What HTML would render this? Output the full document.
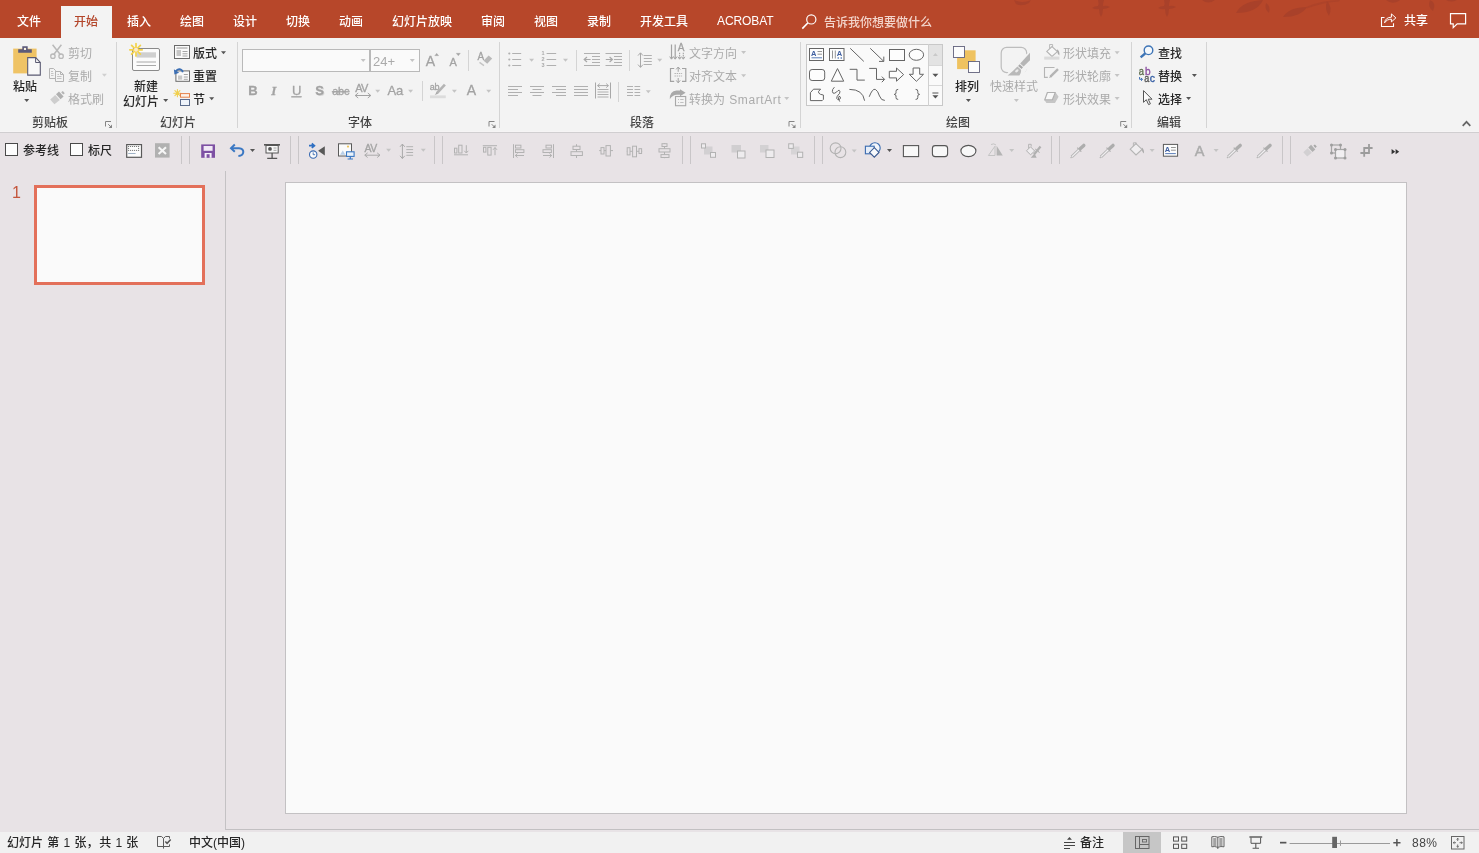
<!DOCTYPE html>
<html lang="zh-CN">
<head>
<meta charset="utf-8">
<title>PowerPoint</title>
<style>
*{box-sizing:border-box;margin:0;padding:0}
html,body{width:1479px;height:853px;overflow:hidden;background:#e8e3e6}
body{font-family:"Liberation Sans","Noto Sans CJK SC",sans-serif;font-size:12px;font-weight:500;color:#262626;position:relative}
#app{position:absolute;left:0;top:0;width:1479px;height:853px;overflow:hidden;background:#e8e3e6;will-change:transform}
.abs{position:absolute}
/* title / tab bar */
#tabbar{position:absolute;left:0;top:0;width:1479px;height:38px;background:#b7472a;overflow:hidden}
#tabbar .tab{position:absolute;top:14px;height:17px;line-height:17px;font-size:12px;color:#fff;white-space:nowrap}
#tabactive{position:absolute;left:61px;top:6px;width:51px;height:33px;background:#f3f3f3}
/* ribbon */
#ribbon{position:absolute;left:0;top:38px;width:1479px;height:95px;background:#f3f3f3;border-bottom:1px solid #d0ced0;box-shadow:inset 0 -1px 0 #f6f4f5}
.t{position:absolute;height:16px;line-height:16px;font-size:12px;white-space:nowrap;color:#262626}
.g{color:#ababab;font-weight:400}
.lbl{color:#444}
.vsep{position:absolute;width:1px;background:#d4d4d4}
/* toolbar */
#toolbar{position:absolute;left:0;top:133px;width:1479px;height:37px;background:#e8e3e6}
.tsep{position:absolute;top:136px;width:1px;height:28px;background:#c9c6c8}
/* body */
#thumb{position:absolute;left:34px;top:185px;width:171px;height:100px;border:3px solid #e3705a;background:#fafafa}
#slide{position:absolute;left:285px;top:182px;width:1122px;height:632px;border:1px solid #c3c1c3;background:#fafafa}
#status{position:absolute;left:0;top:832px;width:1479px;height:21px;background:#f1f1f1}
svg{position:absolute;left:0;top:0;overflow:visible}
</style>
</head>
<body>
<div id="app">

<!-- ===== TAB BAR ===== -->
<div id="tabbar">
  <div id="tabactive"></div>
  <div class="tab" style="left:17px">文件</div>
  <div class="tab" style="left:74px;color:#b3452a">开始</div>
  <div class="tab" style="left:127px">插入</div>
  <div class="tab" style="left:180px">绘图</div>
  <div class="tab" style="left:233px">设计</div>
  <div class="tab" style="left:286px">切换</div>
  <div class="tab" style="left:339px">动画</div>
  <div class="tab" style="left:392px">幻灯片放映</div>
  <div class="tab" style="left:481px">审阅</div>
  <div class="tab" style="left:534px">视图</div>
  <div class="tab" style="left:587px">录制</div>
  <div class="tab" style="left:640px">开发工具</div>
  <div class="tab" style="left:717px;top:13px;letter-spacing:-0.1px">ACROBAT</div>
  <div class="tab" style="left:824px;top:15px;color:#f3d5cc">告诉我你想要做什么</div>
  <div class="tab" style="left:1404px;top:13px">共享</div>
</div>

<!-- ===== RIBBON ===== -->
<div id="ribbon"></div>
<!-- group separators -->
<div class="vsep" style="left:116px;top:42px;height:86px"></div>
<div class="vsep" style="left:237px;top:42px;height:86px"></div>
<div class="vsep" style="left:499px;top:42px;height:86px"></div>
<div class="vsep" style="left:800px;top:42px;height:86px"></div>
<div class="vsep" style="left:1131px;top:42px;height:86px"></div>
<div class="vsep" style="left:1206px;top:42px;height:86px"></div>
<!-- small in-group separators -->
<div class="vsep" style="left:468px;top:50px;height:21px"></div>
<div class="vsep" style="left:422px;top:81px;height:20px"></div>
<div class="vsep" style="left:576px;top:50px;height:21px"></div>
<div class="vsep" style="left:629px;top:50px;height:21px"></div>
<div class="vsep" style="left:618px;top:82px;height:20px"></div>

<!-- clipboard group -->
<div class="t" style="left:13px;top:79px">粘贴</div>
<div class="t g" style="left:68px;top:46px">剪切</div>
<div class="t g" style="left:68px;top:69px">复制</div>
<div class="t g" style="left:68px;top:92px">格式刷</div>
<div class="t lbl" style="left:32px;top:115px">剪贴板</div>
<!-- slides group -->
<div class="t" style="left:134px;top:79px">新建</div>
<div class="t" style="left:123px;top:94px">幻灯片</div>
<div class="t" style="left:193px;top:46px">版式</div>
<div class="t" style="left:193px;top:69px">重置</div>
<div class="t" style="left:193px;top:92px">节</div>
<div class="t lbl" style="left:160px;top:115px">幻灯片</div>
<!-- font group -->
<div class="abs" style="left:242px;top:49px;width:128px;height:23px;border:1px solid #b9b9b9;background:#fafafa"></div>
<div class="abs" style="left:370px;top:49px;width:50px;height:23px;border:1px solid #b9b9b9;background:#fafafa"></div>
<div class="t g" style="left:373px;top:54px;font-size:13px">24+</div>
<div class="t lbl" style="left:348px;top:115px">字体</div>
<!-- paragraph group -->
<div class="t g" style="left:689px;top:46px">文字方向</div>
<div class="t g" style="left:689px;top:69px">对齐文本</div>
<div class="t g" style="left:689px;top:92px;word-spacing:.9px">转换为 <span style="letter-spacing:.6px">SmartArt</span></div>
<div class="t lbl" style="left:630px;top:115px">段落</div>
<!-- drawing group -->
<div class="abs" style="left:806px;top:44px;width:137px;height:62px;border:1px solid #c8c8c8;background:#fafafa"></div>
<div class="abs" style="left:929px;top:45px;width:13px;height:21px;background:#e3e3e3"></div>
<div class="abs" style="left:928px;top:44px;width:1px;height:62px;background:#d0d0d0"></div>
<div class="abs" style="left:929px;top:65px;width:13px;height:1px;background:#d8d8d8"></div>
<div class="abs" style="left:929px;top:85px;width:13px;height:1px;background:#d8d8d8"></div>
<div class="t" style="left:955px;top:79px">排列</div>
<div class="t g" style="left:990px;top:79px">快速样式</div>
<div class="t g" style="left:1063px;top:46px">形状填充</div>
<div class="t g" style="left:1063px;top:69px">形状轮廓</div>
<div class="t g" style="left:1063px;top:92px">形状效果</div>
<div class="t lbl" style="left:946px;top:115px">绘图</div>
<!-- editing group -->
<div class="t" style="left:1158px;top:46px">查找</div>
<div class="t" style="left:1158px;top:69px">替换</div>
<div class="t" style="left:1158px;top:92px">选择</div>
<div class="t lbl" style="left:1157px;top:115px">编辑</div>

<!-- ===== TOOLBAR ===== -->
<div id="toolbar"></div>
<div class="abs" style="left:5px;top:143px;width:13px;height:13px;border:1px solid #4a4a4a;background:#fdfdfd"></div>
<div class="t" style="left:23px;top:143px">参考线</div>
<div class="abs" style="left:70px;top:143px;width:13px;height:13px;border:1px solid #4a4a4a;background:#fdfdfd"></div>
<div class="t" style="left:88px;top:143px">标尺</div>
<div class="tsep" style="left:181px"></div><div class="tsep" style="left:189px"></div>
<div class="tsep" style="left:290px"></div><div class="tsep" style="left:298px"></div>
<div class="tsep" style="left:434px"></div><div class="tsep" style="left:442px"></div>
<div class="tsep" style="left:682px"></div><div class="tsep" style="left:690px"></div>
<div class="tsep" style="left:814px"></div><div class="tsep" style="left:822px"></div>
<div class="tsep" style="left:1051px"></div><div class="tsep" style="left:1059px"></div>
<div class="tsep" style="left:1282px"></div><div class="tsep" style="left:1290px"></div>

<!-- ===== BODY ===== -->
<div class="abs" style="left:225px;top:171px;width:1px;height:659px;background:#c4c2c4"></div>
<div class="abs" style="left:226px;top:829px;width:1253px;height:1px;background:#c2c0c2"></div>
<div class="t" style="left:12px;top:185px;font-size:16px;font-weight:400;color:#c4553c">1</div>
<div id="thumb"></div>
<div id="slide"></div>

<!-- ===== STATUS BAR ===== -->
<div id="status"></div>
<div class="t" style="left:7px;top:835px;word-spacing:.9px">幻灯片 第 1 张<span style="letter-spacing:.8px">，</span>共 1 张</div>
<div class="t" style="left:189px;top:835px">中文(中国)</div>
<div class="t" style="left:1080px;top:835px">备注</div>
<div class="abs" style="left:1123px;top:832px;width:38px;height:21px;background:#c6c6c6"></div>
<div class="t" style="left:1412px;top:835px;color:#444;letter-spacing:.5px">88%</div>


<!-- ===== ICON OVERLAY ===== -->
<svg width="1479" height="853" viewBox="0 0 1479 853">
<g fill="#a6402a" opacity=".8">
<path d="M1014 0q8 4 17 0l-2 3q-7 4-13 1z"/>
<path d="M1098 0q1 4 0 6q-4 0-6 2q4 2 7 1q0 5 2 8q2-3 2-8q4 0 7-2q-3-2-7-1q0-3 1-6z"/>
<path d="M1164 0q1 4 0 6q-4 0-6 2q4 2 7 1q0 5 2 8q2-3 2-8q4 0 7-2q-3-2-7-1q0-3 1-6z"/>
<path d="M1202 0q6 5 13 0z"/>
<path d="M1236 13q6-12 27-13q-6 13-27 13z"/>
<path d="M1266 3q5 3 3 10q-5-4-3-10z"/>
<path d="M1283 17q6-10 24-10q-6 10-24 10z"/>
<path d="M1306 7q16-7 34-7l-1 1.500q-16 1-32 7z" opacity=".7"/>
<path d="M1327 1q6 6 2 15q-5-7-2-15z"/>
<path d="M1386 0q6 5 13 1l1-1z"/>
<path d="M1430 0q7 3 3 11q-6-4-3-11z"/>
<path d="M1446 0q5 3 11 0z"/>
</g>
<g fill="none" stroke="#fff" stroke-width="1.2">
<circle cx="811.3" cy="19.4" r="4.6"/><path d="M808 22.8L802.3 28.6" stroke-width="1.6"/>
<path d="M1384.5 17.5H1381.5V26.5H1393.5V23.2" stroke-width="1.1"/>
<path d="M1384.6 22.8C1385 19.2 1387.6 17.2 1391.4 17.2V13.9L1395.9 17.9L1391.4 21.9V19.2C1388.6 19.2 1386.2 20.2 1384.6 22.8Z" stroke-width="1" stroke-linejoin="round"/>
<path d="M1450.5 13.6H1465.6V23.8H1457.2L1453.2 27.6V23.8H1450.5Z" stroke-width="1.2" stroke-linejoin="miter"/>
</g>
<g><path d="M24.2 99.0h5l-2.5 3z" fill="#555"/><path d="M101.9 73.8h5l-2.5 3z" fill="#d0d0d0"/><path d="M163.2 99.0h5l-2.5 3z" fill="#555"/><path d="M221.0 51.2h5l-2.5 3z" fill="#555"/><path d="M209.2 97.2h5l-2.5 3z" fill="#555"/><path d="M360.7 59.0h5l-2.5 3z" fill="#c4c4c4"/><path d="M409.8 59.0h5l-2.5 3z" fill="#c4c4c4"/><path d="M375.2 89.8h5l-2.5 3z" fill="#c4c4c4"/><path d="M408.1 89.8h5l-2.5 3z" fill="#c4c4c4"/><path d="M451.9 89.8h5l-2.5 3z" fill="#c4c4c4"/><path d="M486.2 89.8h5l-2.5 3z" fill="#c4c4c4"/><path d="M529.1 58.8h5l-2.5 3z" fill="#c4c4c4"/><path d="M563.0 58.8h5l-2.5 3z" fill="#c4c4c4"/><path d="M657.2 58.8h5l-2.5 3z" fill="#c4c4c4"/><path d="M645.8 90.2h5l-2.5 3z" fill="#c4c4c4"/><path d="M741.1 51.0h5l-2.5 3z" fill="#c4c4c4"/><path d="M741.1 74.3h5l-2.5 3z" fill="#c4c4c4"/><path d="M784.2 96.9h5l-2.5 3z" fill="#c4c4c4"/><path d="M965.9 99.0h5l-2.5 3z" fill="#555"/><path d="M1013.9 99.0h5l-2.5 3z" fill="#c4c4c4"/><path d="M1114.6 51.2h5l-2.5 3z" fill="#c4c4c4"/><path d="M1114.6 74.0h5l-2.5 3z" fill="#c4c4c4"/><path d="M1114.6 97.0h5l-2.5 3z" fill="#c4c4c4"/><path d="M1191.9 74.0h5l-2.5 3z" fill="#555"/><path d="M1186.1 97.0h5l-2.5 3z" fill="#555"/><path d="M250.0 148.9h5l-2.5 3z" fill="#555"/><path d="M386.1 148.7h5l-2.5 3z" fill="#c4c4c4"/><path d="M420.8 148.7h5l-2.5 3z" fill="#c4c4c4"/><path d="M851.7 149.5h5l-2.5 3z" fill="#c4c4c4"/><path d="M887.0 149.1h5l-2.5 3z" fill="#555"/><path d="M1009.2 149.0h5l-2.5 3z" fill="#c4c4c4"/><path d="M1149.6 149.0h5l-2.5 3z" fill="#c4c4c4"/><path d="M1213.6 149.0h5l-2.5 3z" fill="#c4c4c4"/></g>
<path d="M932.9 56.1h5l-2.5-3z" fill="#c9c9c9"/><path d="M932.4 73.7h6l-3 3.2z" fill="#555"/><path d="M932.4 92.5h6v1h-6z M932.4 95.3h6l-3 3.2z" fill="#555"/>
<path d="M105.5 126.5V121.5H111" fill="none" stroke="#848484" stroke-width="1"/><path d="M108.2 124.2L111 127" stroke="#848484" stroke-width="1"/><path d="M112 124.6V128H108.6Z" fill="#848484"/>
<path d="M489.0 126.5V121.5H494.5" fill="none" stroke="#848484" stroke-width="1"/><path d="M491.7 124.2L494.5 127" stroke="#848484" stroke-width="1"/><path d="M495.5 124.6V128H492.1Z" fill="#848484"/>
<path d="M789.0 126.5V121.5H794.5" fill="none" stroke="#848484" stroke-width="1"/><path d="M791.7 124.2L794.5 127" stroke="#848484" stroke-width="1"/><path d="M795.5 124.6V128H792.1Z" fill="#848484"/>
<path d="M1120.7 126.5V121.5H1126.2" fill="none" stroke="#848484" stroke-width="1"/><path d="M1123.4 124.2L1126.2 127" stroke="#848484" stroke-width="1"/><path d="M1127.2 124.6V128H1123.8Z" fill="#848484"/>
<path d="M1462.700 125.800L1466.500 121.800L1470.300 125.800" fill="none" stroke="#666" stroke-width="1.700"/>
<!-- paste icon -->
<g>
<rect x="13.2" y="48.6" width="23.4" height="24.8" fill="#efc365"/>
<path d="M18.2 49.2h13.6v3.6h-13.6z M22.3 46.2h5.4v3.4h-5.4z" fill="#5c5a79"/>
<circle cx="25" cy="48.9" r="1.2" fill="#fdf6e6"/>
<path d="M27.7 57.6h8l4.6 4.8v12.7h-12.6z" fill="#f8f8f8" stroke="#5a5a72" stroke-width="1.1"/>
<path d="M35.6 57.8v4.7h4.6" fill="none" stroke="#5a5a72" stroke-width="1"/>
</g>
<!-- cut (disabled) -->
<g fill="none" stroke="#b9b9b9" stroke-width="1.5">
<path d="M52.6 44.8L60.4 54.8M61.4 44.8L53.6 54.8"/>
<circle cx="52.9" cy="56.2" r="2.2" stroke-width="1.3"/><circle cx="61.1" cy="56.2" r="2.2" stroke-width="1.3"/>
</g>
<!-- copy (disabled) -->
<g fill="#f3f3f3" stroke="#b4b4b4" stroke-width="1">
<path d="M49.5 68.5h4l2 2v8h-6z"/>
<path d="M55.5 71.5h5l3 3v7h-8z"/>
<path d="M60.5 71.7v2.8h2.8" fill="none"/>
<path d="M51 71.5h2M51 73.5h2.5M51 75.5h2.5M57 76.5h4.5M57 78.5h4.5M57.5 74.5h1.5" stroke="#c4c4c4" fill="none"/>
</g>
<!-- format painter (disabled) -->
<g>
<path d="M61.2 92.2l1.6-1.2l2 2.2l-1.6 1.4z" fill="#b5b5b5"/>
<path d="M56 94.2l3-2.8l4.6 5l-3 2.8z" fill="#b0b0b0"/>
<path d="M55.2 95l4.6 5l-5.4 4.2l-4.2-4.6z" fill="#cdcdcd"/>
</g>
<!-- new slide -->
<g>
<rect x="132.5" y="48.5" width="27" height="22" rx="1.5" fill="#fbfbfb" stroke="#8a8a8a"/>
<rect x="136.5" y="52.3" width="19.5" height="5.3" fill="#cfcfcf"/>
<path d="M136.5 62h19.5M136.5 65.5h19.5" stroke="#a8a8a8" stroke-width="1"/>
<g stroke="#f3d24a" stroke-width="1.7" stroke-linecap="round">
<path d="M136 43.6v12.4M129.8 49.8h12.4M131.6 45.4l8.8 8.8M140.4 45.4l-8.8 8.8"/>
</g>
<circle cx="136" cy="49.8" r="2" fill="#fbe9d0"/>
</g>
<!-- layout -->
<g>
<rect x="174.5" y="45.5" width="15" height="13" fill="#fafafa" stroke="#6a6a6a"/>
<path d="M176.5 48h11" stroke="#bdbdbd" stroke-width="1.6"/>
<rect x="176.5" y="50" width="4.5" height="6" fill="#c6c6c6"/>
<path d="M182.5 51.5h5M182.5 53.8h5M182.5 56h5" stroke="#9a9a9a" stroke-width=".9"/>
</g>
<!-- reset -->
<g>
<rect x="175.9" y="70.9" width="13.6" height="10.4" fill="#fafafa" stroke="#6a6a6a"/>
<rect x="178" y="75.5" width="4.2" height="4.2" fill="#c8c8c8"/>
<path d="M183.8 74.5h4M183.8 77h4M183.8 79.3h4" stroke="#9a9a9a" stroke-width=".9"/>
<path d="M182.8 72.2C182 68.6 177.6 68 176 71.2" fill="none" stroke="#3c6fb4" stroke-width="1.7"/>
<path d="M173.9 69.2l.5 5.2l4.8-1.6z" fill="#3c6fb4"/>
</g>
<!-- section -->
<g>
<g stroke="#f0cf4c" stroke-width="1.1" stroke-linecap="round"><path d="M177.4 89.6v7.2M173.8 93.2h7.2M174.9 90.7l5 5M179.9 90.7l-5 5"/></g>
<rect x="180.5" y="93.6" width="9" height="3.6" fill="#fdf3ea" stroke="#e5824a"/>
<rect x="180.5" y="99.5" width="9" height="6" fill="#eef3fa" stroke="#5b6c8c"/>
</g>
<!-- font group glyph buttons (disabled) -->
<g fill="#a3a3a3" stroke="#a3a3a3" stroke-width=".3" font-family="Liberation Sans, sans-serif">
<text x="248.3" y="95.3" font-size="13" font-weight="bold">B</text>
<text x="271.2" y="95.3" font-size="13" font-style="italic" font-family="Liberation Serif, serif" font-weight="bold">I</text>
<text x="292" y="94.8" font-size="13">U</text>
<rect x="291.6" y="96.2" width="10" height="1.1"/>
<text x="316.2" y="96.3" font-size="13" font-weight="bold" fill="#d9d9d9" stroke="none">S</text>
<text x="315.2" y="95.3" font-size="13" font-weight="bold">S</text>
<text x="332.3" y="95" font-size="11" letter-spacing="-.3">abc</text>
<rect x="332" y="91.2" width="17.6" height="1"/>
<text x="355.2" y="91.8" font-size="11" letter-spacing="-.6">AV</text>
<path d="M355.2 95.5h15.6" stroke="#a3a3a3" stroke-width="1" fill="none"/><path d="M358.2 93l-3 2.5l3 2.5M367.8 93l3 2.5l-3 2.5" stroke="#a3a3a3" stroke-width="1" fill="none"/>
<text x="387.6" y="94.8" font-size="13" letter-spacing="-.3">Aa</text>
<text x="425.8" y="65.8" font-size="14">A</text>
<path d="M434.7 55.7h4l-2-2.4z"/>
<text x="449.6" y="65.8" font-size="11">A</text>
<path d="M456.2 53.3h4.2l-2.1 2.5z"/>
<text x="477.6" y="60.4" font-size="10">A</text>
<path d="M483.6 60.8l5-5.2l3.6 3l-5 5.2z" fill="#b9b9b9" stroke="none"/>
<path d="M479.5 62.4l4.5 3.2" stroke="#c4c4c4" stroke-width="1.4" fill="none"/>
<text x="429.8" y="89.6" font-size="9" letter-spacing="-.3">ab</text>
<path d="M444.9 84.6l-8 8.6" stroke="#b4b4b4" stroke-width="2.6" fill="none"/>
<path d="M436.6 92.4l-1.4 2.4l2.6-1.2z"/>
<rect x="430" y="95.4" width="15.8" height="2.8" fill="#dcdcdc" stroke="none"/>
<text x="466.8" y="95.3" font-size="14">A</text>
</g>
<!-- paragraph group (disabled) -->
<g fill="none" stroke="#b0b0b0" stroke-width="1">
<!-- bullets -->
<path d="M512.2 53.5h9M512.2 59.5h9M512.2 65.5h9"/>
<g fill="#b0b0b0" stroke="none"><circle cx="509.3" cy="53.5" r="1.1"/><circle cx="509.3" cy="59.5" r="1.1"/><circle cx="509.3" cy="65.5" r="1.1"/></g>
<!-- numbering -->
<path d="M546.6 53.5h9.6M546.6 59.5h9.6M546.6 65.5h9.6"/>
<g fill="#aaa" stroke="none" font-family="Liberation Sans, sans-serif" font-size="5.5" font-weight="bold"><text x="541.4" y="55.4">1</text><text x="541.4" y="61.4">2</text><text x="541.4" y="67.4">3</text></g>
<!-- decrease indent -->
<path d="M584 53.5h16M592 56.5h8M592 59.5h8M592 62.5h8M584 65.5h16"/>
<path d="M590.6 59.5h-6.2M587 57l-2.8 2.5l2.8 2.5" stroke="#a8a8a8" stroke-width="1.2"/>
<!-- increase indent -->
<path d="M605.5 53.5h16.5M614 56.5h8M614 59.5h8M614 62.5h8M605.5 65.5h16.5"/>
<path d="M605.8 59.5h6.2M609.6 57l2.8 2.5l-2.8 2.5" stroke="#a8a8a8" stroke-width="1.2"/>
<!-- line spacing -->
<path d="M643.8 55.5h8M643.8 58.5h8M643.8 61.5h8M643.8 64.5h8"/>
<path d="M640.5 53v14.2M638 55.6l2.5-2.8l2.5 2.8M638 64.6l2.5 2.8l2.5-2.8" stroke="#a8a8a8"/>
<!-- align left / center / right / justify -->
<path d="M508 86.5h14M508 89.5h10M508 92.5h14M508 95.5h10"/>
<path d="M530 86.5h14M532.5 89.5h9M530 92.5h14M532.5 95.5h9"/>
<path d="M552 86.5h14M556 89.5h10M552 92.5h14M556 95.5h10"/>
<path d="M574 86.5h14M574 89.5h14M574 92.5h14M574 95.5h14"/>
<!-- distribute -->
<path d="M595.5 82.5v16M610.5 82.5v16" stroke="#a8a8a8"/>
<path d="M597.5 89.5h11M597.5 92h11M597.5 94.5h11M597.5 97h11"/>
<path d="M597.6 85.6h10.8M599.8 83.6l-2.2 2l2.2 2M606.2 83.6l2.2 2l-2.2 2" stroke="#a8a8a8"/>
<!-- columns -->
<path d="M627 86.5h6M627 89.5h6M627 92.5h6M627 95.5h6M634.5 86.5h5.7M634.5 89.5h5.7M634.5 92.5h5.7M634.5 95.5h5.7"/>
<!-- text direction -->
<path d="M671.5 44.600v14.200M675.200 44.600v14.200" stroke="#a2a2a2" stroke-width="1.200"/>
<path d="M669.700 56.600l1.800 2.600l1.800-2.600M673.400 56.600l1.800 2.600l1.800-2.600" stroke="#a2a2a2" stroke-width="1"/>
<path d="M679.600 52.800v5.800M683.300 52.800v5.800" stroke="#a2a2a2" stroke-width="1.100" stroke-dasharray="1.400 .8"/>
<path d="M678 56.800l1.600 2.400l1.600-2.400M681.700 56.800l1.600 2.400l1.600-2.400" stroke="#a2a2a2" stroke-width="1"/>
<text x="677.800" y="51.200" font-family="Liberation Sans, sans-serif" font-size="10" fill="#a2a2a2" stroke="#a2a2a2" stroke-width=".3">A</text>
<!-- align text -->
<path d="M674.200 68.500h-3.700v12.800h3.700M682 68.500h3.800v12.800h-3.800" stroke="#a2a2a2" stroke-width="1.200"/>
<path d="M678.200 67.200v4.600M676.200 69.400l2-2.400l2 2.400M678.200 82.600v-4.600M676.200 80.400l2 2.400l2-2.400" stroke="#a2a2a2" stroke-width="1"/>
<path d="M674.500 73.500h7.600M674.500 76h7.600" stroke="#b4b4b4" stroke-dasharray="1.400 .8"/>
<!-- smartart -->
<path d="M669.800 99.200Q669.600 91.200 676.500 90.600H680V89.200L685.600 92.800L680 96.300V94.800H677Q672.500 95 669.800 99.200Z" fill="#a9a9a9" stroke="none"/>
<rect x="675.500" y="96.500" width="10.200" height="9.200" fill="#f3f3f3" stroke="#a8a8a8" stroke-width="1.100"/>
<path d="M678 99.500h1M680.200 99.500h3.400M678 102.500h1M680.200 102.500h3.400" stroke="#c0c0c0"/>
</g>
<!-- shapes gallery -->
<g fill="none" stroke="#656565" stroke-width="1">
<!-- row 1 -->
<rect x="809.5" y="48.5" width="14" height="12" fill="#fdfdfd"/>
<text x="811" y="55.8" font-family="Liberation Sans, sans-serif" font-size="7.5" font-weight="bold" fill="#3f5fa0" stroke="none">A</text>
<path d="M817.500 51.500h4.500M817.500 54.200h4.500" stroke="#8a8a8a" stroke-width=".9"/><path d="M811.500 57.800h10.500" stroke="#4a6fb0" stroke-width=".9"/>
<rect x="829.5" y="48.5" width="14.5" height="12" fill="#fdfdfd"/>
<path d="M832.500 50.500v8M835.300 50.500v8" stroke="#8a8a8a" stroke-width=".9"/>
<text x="836.8" y="56" font-family="Liberation Sans, sans-serif" font-size="7.5" font-weight="bold" fill="#3f5fa0" stroke="none">A</text>
<path d="M838.200 57v2M841.200 57v2" stroke="#4a6fb0" stroke-width=".9"/>
<path d="M850.200 48.300L863.800 61.400"/>
<path d="M870.200 48.300L883.600 61.200M883.800 56.600v4.800h-4.800"/>
<rect x="889.5" y="49.500" width="15" height="11" fill="#fdfdfd"/>
<ellipse cx="916.400" cy="54.800" rx="7.200" ry="5.500" fill="#fdfdfd"/>
<!-- row 2 -->
<rect x="809.500" y="69.500" width="15.200" height="11" rx="2.600" fill="#fdfdfd"/>
<path d="M837.500 68.600L843.700 81.200H831.300Z" fill="#fdfdfd"/>
<path d="M849.700 69.300H857V80.100H864.800"/>
<path d="M869.200 68.400H876.500V79.400H884.400M881.800 76.600l2.800 2.800l-2.800 2.800"/>
<path d="M889.300 71.300H896.500V68L903.600 74.600L896.500 81.200V77.900H889.300Z" fill="#fdfdfd"/>
<path d="M913.100 68H919.700V74.300H923.500L916.400 81.300L909.300 74.300H913.100Z" fill="#fdfdfd"/>
<!-- row 3 -->
<path d="M813.5 89.200H820.600Q817.400 91.600 818.800 93.100Q820 94.700 823.400 95V99.400L822.200 100.600H810.400V92.700Z" fill="#fdfdfd"/>
<path d="M834.400 87.200Q832 89.500 832.400 91.600Q832.700 93.900 834.700 93.200Q837 92 838 90.600Q839.400 89.600 839.900 91.300Q840.200 93.400 838.200 95Q836.400 96.800 836.800 98.600Q837.600 100.400 839.600 99.400Q841.200 98 840 96.600Q838.700 95.900 838.400 97.600Q838.400 99.600 839.800 101.600"/>
<path d="M849.400 89.400Q862.800 89.300 864.600 100.700"/>
<path d="M869.200 96.800Q872.500 88.200 875.300 89.400Q877.800 90.500 879.500 96Q881.300 100.800 884.800 100.400"/>
<path d="M898.200 89.400Q895.800 89.300 896 91.400V92.800Q896 94.300 894.200 94.400Q896 94.500 896 96V97.500Q895.800 99.500 898.200 99.400"/>
<path d="M915.600 89.400Q918 89.300 917.800 91.400V92.800Q917.800 94.300 919.600 94.400Q917.800 94.500 917.800 96V97.500Q918 99.500 915.600 99.400"/>
</g>
<!-- arrange -->
<g>
<rect x="957.100" y="50.300" width="18.500" height="18.800" fill="#efc25f"/>
<rect x="953.500" y="46.500" width="11" height="11" fill="#fcfcfc" stroke="#62627c" stroke-width=".9"/>
<rect x="968.500" y="61.500" width="11" height="11" fill="#fcfcfc" stroke="#62627c" stroke-width=".9"/>
</g>
<!-- quick styles (disabled) -->
<g>
<rect x="1001.200" y="47.400" width="25.500" height="25.200" rx="5.500" fill="none" stroke="#bdbdbd" stroke-width="1.200"/>
<path d="M1015 62L1031 51V63L1022 77H1005Z" fill="#f3f3f3"/>
<path d="M1030 52.800V60.200L1023.600 66.600L1020.200 63.600Z" fill="#b6b6b6"/>
<path d="M1019.600 64.200L1023 67.200L1021.500 68.900L1018.100 65.900Z" fill="#a9a9a9"/>
<path d="M1017.400 66.600L1021 69.700Q1021.500 73 1019.400 75.400H1007.600Q1013 71.500 1017.400 66.600Z" fill="#b9b9b9"/>
<ellipse cx="1016.800" cy="70.800" rx="1.900" ry="1.200" transform="rotate(-40 1016.800 70.800)" fill="#ebebeb"/>
</g>
<!-- shape fill (disabled) -->
<g fill="none" stroke="#b4b4b4">
<path d="M1052 46.600L1057.400 51.600L1052 56.400L1046.800 51.400Z" fill="#f7f7f7" stroke-width="1.100"/>
<path d="M1049.600 48.600V44.500H1052.600V47" stroke-width=".9"/>
<path d="M1057 49.200Q1060 51 1059.300 55.500Q1057.500 54 1057.200 51.500Z" fill="#a9a9a9" stroke="none"/>
<rect x="1044.200" y="56.600" width="15.200" height="3" fill="#dadada" stroke="none"/>
</g>
<!-- shape outline (disabled) -->
<g fill="none" stroke="#b4b4b4">
<path d="M1054.500 67.500H1044.500V77.400H1047.800" stroke-width="1.100"/>
<path d="M1058 69.200L1050.400 76.600" stroke-width="2.400"/>
<path d="M1050.300 75.400l-1.300 2.600l2.800-1z" fill="#b0b0b0" stroke="none"/>
</g>
<!-- shape effects (disabled) -->
<g stroke-linejoin="round">
<path d="M1055.600 92.600L1058.600 96.800L1055 103H1046.400L1044.600 100.200H1052.500Z" fill="#c6c6c6"/>
<path d="M1047.400 92.500H1055.300L1052.300 99.900H1044.700Z" fill="#f8f8f8" stroke="#b0b0b0" stroke-width="1.200"/>
</g>
<!-- find -->
<g fill="none" stroke="#3d74b6">
<circle cx="1148.500" cy="50.300" r="4.300" stroke-width="1.400" fill="#f4f8fc"/>
<path d="M1145.200 53.500L1140.600 57.300" stroke-width="2.300"/>
</g>
<!-- replace -->
<g font-family="Liberation Sans, sans-serif" font-size="11" stroke-width=".35">
<text x="1138.800" y="74.700" fill="#5f6f50" stroke="#5f6f50" textLength="5.200" lengthAdjust="spacingAndGlyphs">a</text><text x="1144.900" y="74.700" fill="#8c50a2" stroke="#8c50a2" textLength="5.600" lengthAdjust="spacingAndGlyphs">b</text>
<text x="1144.200" y="81.800" fill="#555" stroke="#555" textLength="5" lengthAdjust="spacingAndGlyphs">a</text><text x="1149.800" y="81.800" fill="#3a62a6" stroke="#3a62a6" textLength="5.200" lengthAdjust="spacingAndGlyphs">c</text>
<path d="M1139.600 77v2.300h2.600M1141 78l1.500 1.400l-1.500 1.400" fill="none" stroke="#3d6db6" stroke-width="1"/>
</g>
<!-- select -->
<path d="M1143.500 90.600V102.300L1146.300 99.700L1148.600 104.600L1150.400 103.800L1148.200 99.200H1152Z" fill="#fbfbfb" stroke="#555" stroke-width="1" stroke-linejoin="round"/>
<!-- ===== toolbar icons ===== -->
<!-- grid settings -->
<g>
<rect x="126.700" y="144.600" width="14.800" height="12.700" fill="#fcfcfc" stroke="#595959" stroke-width="1.200"/>
<g fill="#6a6a6a"><rect x="128.1" y="146.0" width="1" height="1"/><rect x="130.1" y="146.0" width="1" height="1"/><rect x="132.1" y="146.0" width="1" height="1"/><rect x="134.1" y="146.0" width="1" height="1"/><rect x="136.1" y="146.0" width="1" height="1"/><rect x="138.1" y="146.0" width="1" height="1"/><rect x="128.1" y="149.9" width="1" height="1"/><rect x="130.1" y="149.9" width="1" height="1"/><rect x="132.1" y="149.9" width="1" height="1"/><rect x="134.1" y="149.9" width="1" height="1"/><rect x="136.1" y="149.9" width="1" height="1"/><rect x="138.1" y="149.9" width="1" height="1"/><rect x="128.1" y="147.95" width="1" height="1"/><rect x="138.1" y="147.95" width="1" height="1"/></g>
<path d="M128.200 153.500h7.400" stroke="#9fb2c6" stroke-width="1"/>
</g>
<!-- grey X -->
<g><rect x="155" y="143.200" width="14.600" height="14.400" fill="#b1b1b1"/>
<path d="M158.600 147.200l7.400 6.800M166 147.200l-7.400 6.800" stroke="#f6f6f6" stroke-width="2.100"/></g>
<!-- save -->
<g><path d="M201.200 144.400h13.800v13.400h-13.800z" fill="#7d50a3"/>
<rect x="203.600" y="146" width="9" height="4.800" fill="#f1e9f6"/>
<rect x="204.600" y="153" width="7" height="4.800" fill="#f6f1f9"/><rect x="206.600" y="154.200" width="3" height="3.600" fill="#7d50a3"/></g>
<!-- undo -->
<g fill="none" stroke="#3b78c3" stroke-width="2">
<path d="M232 148.200H239Q243.400 148.600 243.300 152Q243 155.600 238.400 156"/>
<path d="M234.800 144.600L231 148.200L234.800 151.800" stroke-linejoin="miter"/>
</g>
<!-- presentation from start -->
<g fill="none" stroke="#565656">
<path d="M264 144.800h16" stroke-width="1.600"/>
<rect x="266" y="145.500" width="12.200" height="7.500" fill="#f7f7f7"/>
<path d="M272.100 153v5M267.200 158.300h10" stroke-width="1.300"/>
<circle cx="270" cy="148.900" r="1.900" fill="#555" stroke="none"/>
<path d="M273.500 148h3M273.500 150.300h3" stroke="#9a9a9a" stroke-width=".9"/>
</g>
<!-- transition timing -->
<g>
<path d="M309 145.700h4.600M311.800 143.500l2.600 2.200l-2.600 2.200" fill="none" stroke="#2f6fc2" stroke-width="1.700"/>
<circle cx="313.200" cy="154.600" r="3.700" fill="#fbfbfb" stroke="#3b6bb2" stroke-width="1.100"/>
<path d="M313.200 152.400v2.300h1.900" fill="none" stroke="#3b6bb2" stroke-width=".9"/>
<path d="M318.100 150.800L324.800 146.200V155.600Z" fill="#585858"/>
</g>
<!-- picture + monitor -->
<g>
<rect x="338.500" y="143.800" width="13" height="12.200" fill="#fbfbfb" stroke="#5a5a5a"/>
<circle cx="348" cy="146.600" r="1.100" fill="#ecc35c"/>
<path d="M340 154.800l2.800-4.300l2.600 4.300z" fill="#b9cfe8"/>
<rect x="346.500" y="151.800" width="7.600" height="4.600" fill="#eaf2fb" stroke="#3b78c3" stroke-width="1.100"/>
<path d="M350.300 156.600v2M347.600 159h5.400" stroke="#3b78c3" stroke-width="1.200" fill="none"/>
</g>
<!-- AV spacing (disabled) -->
<g fill="#a4a4a4"><text x="364.500" y="151.700" font-family="Liberation Sans, sans-serif" font-size="10.500" letter-spacing="-.5" stroke="#a4a4a4" stroke-width=".3">AV</text>
<path d="M364.800 155.200h15.200M367.600 152.900l-2.800 2.300l2.800 2.300M377.200 152.900l2.800 2.300l-2.800 2.300" fill="none" stroke="#aaa"/></g>
<!-- line spacing (disabled) -->
<g fill="none" stroke="#b2b2b2">
<path d="M406.300 146.700h6.800M406.300 149.600h6.800M406.300 152.500h6.800M406.300 155.300h6.800"/>
<path d="M402.400 144.200v14.200M400 146.800l2.400-2.700l2.400 2.700M400 155.800l2.400 2.700l2.400-2.700" stroke="#a8a8a8"/>
</g>
<!-- align icons (disabled) -->
<g fill="none" stroke="#b2b2b2">
<!-- bottom -->
<path d="M454 154.800h14"/><rect x="454.500" y="148.200" width="2.400" height="4.800"/><rect x="458.700" y="145.200" width="3.300" height="7.800"/><path d="M466.300 145.200v7.600M464.300 150.800l2 2.200l2-2.200"/>
<!-- top -->
<path d="M482.800 145.700h14.200"/><rect x="483.500" y="147.300" width="2.400" height="4.800"/><rect x="487.800" y="147.300" width="3.300" height="7.800"/><path d="M495 147.600v7.600M493 149.800l2-2.200l2 2.200"/>
<!-- left -->
<path d="M513.500 144.200v13.800"/><rect x="515.500" y="145.200" width="5.400" height="2.800"/><rect x="515.500" y="149.700" width="8.400" height="2.800"/><path d="M515.300 155.500h8.700M517.500 153.500l-2.200 2l2.200 2"/>
<!-- right -->
<path d="M553.500 144.200v13.800"/><rect x="546" y="145.200" width="5.400" height="2.800"/><rect x="543" y="149.700" width="8.400" height="2.800"/><path d="M543 155.500h8.700M549.500 153.500l2.200 2l-2.200 2"/>
<!-- center h -->
<path d="M576.500 144.200v13.800"/><rect x="573" y="146.200" width="7" height="3.300" fill="#e8e3e6"/><rect x="571" y="151.700" width="11.400" height="3.800" fill="#e8e3e6"/>
<!-- middle v -->
<path d="M599.200 150.600h13.800"/><rect x="601" y="147.600" width="3" height="6.400" fill="#e8e3e6"/><rect x="606" y="145.600" width="4.400" height="10.400" fill="#e8e3e6"/>
<!-- distribute h -->
<path d="M626.800 151.300h15.400"/><rect x="627.200" y="147.700" width="2.800" height="7.200" fill="#e8e3e6"/><rect x="632.600" y="146.200" width="3.900" height="10.600" fill="#e8e3e6"/><rect x="639" y="148.700" width="2.600" height="4.800" fill="#e8e3e6"/>
<!-- distribute v -->
<path d="M664.500 143.200v15"/><rect x="662" y="143.700" width="5" height="2.800" fill="#e8e3e6"/><rect x="659" y="148.700" width="11" height="3.300" fill="#e8e3e6"/><rect x="661" y="154.600" width="8" height="2.900" fill="#e8e3e6"/>
</g>
<!-- group / order icons (disabled) -->
<g stroke="#b2b2b2" fill="#eeecee">
<rect x="704" y="146.500" width="8.500" height="8" fill="#d2d0d2" stroke="none"/>
<rect x="701.500" y="143.800" width="4" height="4.200"/><rect x="710.500" y="152.500" width="5" height="4.800"/>
<rect x="731.500" y="145" width="9.500" height="7.500" fill="#d0ced0" stroke="none"/><rect x="737.500" y="151" width="7.500" height="7"/>
<rect x="760" y="145" width="8.500" height="7.500" fill="#d3d1d3" stroke="none"/><rect x="766" y="150" width="8" height="7.500"/>
<rect x="791" y="146.500" width="8.500" height="8" fill="#d6d4d6" stroke="none"/>
<rect x="788.700" y="143.800" width="4.600" height="4.600"/><rect x="797.500" y="152.200" width="5.200" height="5.200"/>
</g>
<!-- merge shapes (disabled) -->
<g fill="none" stroke="#b2b2b2" stroke-width="1.100"><circle cx="835.600" cy="148.300" r="5.400"/><circle cx="840.400" cy="152.200" r="5.400"/></g>
<!-- shapes -->
<g stroke="#3b6cb0" stroke-width="1.100">
<circle cx="874.900" cy="148" r="5.300" fill="#f3f6fb"/>
<rect x="865.400" y="146.200" width="8.800" height="7.600" fill="#e6eef9"/>
<path d="M874.300 147.700l4.700 4.700l-4.700 4.700l-4.700-4.700z" fill="#f8fafc" stroke="#3a5990"/>
</g>
<!-- rect / rounded rect / ellipse -->
<g fill="#f8f8f8" stroke="#565656" stroke-width="1.100">
<rect x="903.400" y="145.600" width="15.200" height="11"/>
<rect x="932.400" y="145.600" width="15.200" height="11" rx="2.800"/>
<ellipse cx="968.400" cy="151" rx="7.500" ry="5.600"/>
</g>
<!-- flip (disabled) -->
<g><path d="M995 146.200V155.500H988.400Z" fill="none" stroke="#c4c4c4"/><path d="M996.600 145.800L1002.800 155.500H996.600Z" fill="#b4b4b4"/>
<path d="M991 144.500q3-1.500 5 .5" fill="none" stroke="#c0c0c0" stroke-width=".9"/></g>
<!-- format paint combo (disabled) -->
<g fill="none" stroke="#b0b0b0">
<path d="M1030.500 146.800l4.200 4.200l-4.200 3.800l-4-4z" fill="#efedef"/>
<path d="M1028.600 148.300v-4h2.600v2.200" stroke-width=".9"/>
<path d="M1040.500 146.500l-6.500 8" stroke-width="2.200"/>
<path d="M1034.500 153.500l-3.800 4.200h6z" fill="#b0b0b0" stroke="none"/>
<path d="M1035 149q3.500 1 4.500 4" stroke-width=".9"/>
</g>
<g fill="none"><path d="M1083.8 145.4L1080.4 148.5" stroke="#adadad" stroke-width="3.400" stroke-linecap="round"/><path d="M1081.3 151.6L1077.3 147.6" stroke="#adadad" stroke-width="1.300"/><path d="M1079.3 149.6L1071.7 156.9" stroke="#b6b6b6" stroke-width="3"/><path d="M1078.9 150.0L1072.0 156.6" stroke="#f1eff1" stroke-width="1.300"/><path d="M1071.7 156.9L1070.6 158.0" stroke="#b6b6b6" stroke-width="1.100"/><path d="M1113.0 145.4L1109.6 148.5" stroke="#adadad" stroke-width="3.400" stroke-linecap="round"/><path d="M1110.5 151.6L1106.5 147.6" stroke="#adadad" stroke-width="1.300"/><path d="M1108.5 149.6L1100.9 156.9" stroke="#b6b6b6" stroke-width="3"/><path d="M1108.1 150.0L1101.2 156.6" stroke="#f1eff1" stroke-width="1.300"/><path d="M1100.9 156.9L1099.8 158.0" stroke="#b6b6b6" stroke-width="1.100"/><path d="M1240.2 145.4L1236.8 148.5" stroke="#adadad" stroke-width="3.400" stroke-linecap="round"/><path d="M1237.7 151.6L1233.7 147.6" stroke="#adadad" stroke-width="1.300"/><path d="M1235.7 149.6L1228.1 156.9" stroke="#b6b6b6" stroke-width="3"/><path d="M1235.3 150.0L1228.4 156.6" stroke="#f1eff1" stroke-width="1.300"/><path d="M1228.1 156.9L1227.0 158.0" stroke="#b6b6b6" stroke-width="1.100"/><path d="M1270.0 145.4L1266.6 148.5" stroke="#adadad" stroke-width="3.400" stroke-linecap="round"/><path d="M1267.5 151.6L1263.5 147.6" stroke="#adadad" stroke-width="1.300"/><path d="M1265.5 149.6L1257.9 156.9" stroke="#b6b6b6" stroke-width="3"/><path d="M1265.1 150.0L1258.2 156.6" stroke="#f1eff1" stroke-width="1.300"/><path d="M1257.9 156.9L1256.8 158.0" stroke="#b6b6b6" stroke-width="1.100"/></g>
<!-- bucket (disabled) -->
<g fill="none" stroke="#b4b4b4"><path d="M1136 143.600l6 5.800l-6 5.600l-5.800-5.800z" fill="#f0eef0" stroke-width="1.100"/>
<path d="M1133.400 146.200v-3.400h2.800v2" stroke-width=".9"/><path d="M1141.800 147.600q2.600 1.800 2.200 6q-1.800-1.400-2.200-3.600z" fill="#adadad" stroke="none"/></g>
<!-- text box -->
<g><rect x="1163.400" y="144.400" width="14.200" height="11.800" fill="#fcfcfc" stroke="#5a5a5a"/>
<text x="1164.800" y="151.600" font-family="Liberation Sans, sans-serif" font-size="7.500" font-weight="bold" fill="#3f5fa0">A</text>
<path d="M1171 147.500h4.800M1171 150.200h4.800" stroke="#8a8a8a" stroke-width=".9"/><path d="M1165.200 153.600h10.600" stroke="#4a6fb0" stroke-width=".9"/></g>
<!-- A (disabled) -->
<text x="1194.800" y="155.700" font-family="Liberation Sans, sans-serif" font-size="14.500" fill="#acacac" stroke="#acacac" stroke-width=".45">A</text>
<!-- brush (disabled) -->
<g><path d="M1313.400 145.600l1.500-1l1.900 2l-1.500 1.300z" fill="#a8a8a8"/><path d="M1308.300 147.400l2.800-2.600l4.200 4.600l-2.800 2.600z" fill="#b0b0b0"/><path d="M1307.600 148.200l4.200 4.600l-4.600 3.600l-3.900-4.200z" fill="#d2d0d2"/></g>
<!-- select frames -->
<g fill="none" stroke="#a6a6a6"><rect x="1331.500" y="145" width="9" height="8" stroke-width="1.200"/>
<rect x="1335.500" y="149.500" width="9.500" height="8.500" fill="#f1eff1" stroke-width="1.200"/>
<g fill="#9e9e9e" stroke="none"><circle cx="1331.500" cy="145" r="1.500"/><circle cx="1340.500" cy="145" r="1.500"/><circle cx="1331.500" cy="153" r="1.500"/><circle cx="1335.500" cy="149.500" r="1.500"/><circle cx="1345" cy="149.500" r="1.500"/><circle cx="1335.500" cy="158" r="1.500"/><circle cx="1345" cy="158" r="1.500"/></g></g>
<!-- crop -->
<g fill="none" stroke="#9c9c9c" stroke-width="1.800"><path d="M1369 144V153.800M1363.400 148H1372.600M1360.400 153H1369.800M1364.200 147.200V156.800"/></g>
<!-- more chevrons -->
<path d="M1391.600 149l3.600 2.650l-3.600 2.650zM1395.600 149l3.600 2.650l-3.600 2.650z" fill="#333"/>
<!-- ===== status bar icons ===== -->
<g fill="none" stroke="#6a6a6a">
<!-- spell check book -->
<path d="M157.500 836.500H161.500L163.500 838.400L165.500 836.500H169.500V838.600M169.500 844.400V846.500H157.500V836.500M163.500 838.400V848.600" stroke="#5c5c5c" stroke-width="1"/>
<path d="M165.300 841.500l1.800 1.800l3.600-3.800" stroke="#555" stroke-width="1.500"/>
<!-- notes -->
<path d="M1064 842.500h11M1064 845.500h11M1064 848.500h6" stroke="#444" stroke-width="1.100"/><path d="M1067 839.800L1069.450 837L1071.900 839.800Z" fill="#444" stroke="none"/>
<!-- normal view -->
<rect x="1135.500" y="836.500" width="13.500" height="12" stroke="#666" stroke-width="1"/><path d="M1139.500 836.500v12M1139.500 844.500h9.500" stroke="#666"/><rect x="1142.500" y="839.500" width="4" height="2.500" stroke="#666" stroke-width=".9"/>
<!-- sorter -->
<g stroke="#555" stroke-width="1"><rect x="1173.500" y="836.900" width="5" height="4.200"/><rect x="1181.700" y="836.900" width="5" height="4.200"/><rect x="1173.500" y="844.200" width="5" height="4.200"/><rect x="1181.700" y="844.200" width="5" height="4.200"/></g>
<!-- reading view -->
<g stroke="#555" stroke-width=".9"><path d="M1217.800 837.200Q1214.500 836 1211.800 836.800V846.800Q1214.500 846 1217.800 847.300Q1221 846 1224 846.800V836.800Q1221 836 1217.800 837.200ZM1217.800 837.200V849"/>
<path d="M1213.200 839h3.200M1213.200 841h3.200M1213.200 843h3.200M1213.200 845h3.200M1219.300 839h3.200M1219.300 841h3.200M1219.300 843h3.200M1219.300 845h3.200" stroke-width="1"/></g>
<!-- slideshow -->
<g stroke="#555"><path d="M1249.400 837h12.800" stroke-width="1.400"/><path d="M1251 837.500v5.800h9.600v-5.800" stroke-width="1"/><path d="M1255.800 843.300v4.600M1252.600 848.300h6.400" stroke-width="1.100"/></g>
</g>
<!-- zoom slider -->
<g>
<rect x="1280" y="841.800" width="6.400" height="1.700" fill="#555"/>
<rect x="1289.600" y="843" width="100.400" height="1" fill="#9a9a9a"/>
<rect x="1340" y="840.500" width="1" height="5.400" fill="#9a9a9a"/>
<rect x="1332.200" y="836.800" width="4.800" height="11.200" fill="#666"/>
<path d="M1393.300 842.700h7.200M1396.900 839.100v7.200" stroke="#555" stroke-width="1.500" fill="none"/>
<!-- fit to window -->
<rect x="1451.500" y="836.500" width="12.500" height="12.500" fill="none" stroke="#666"/>
<path d="M1457.700 838v3M1457.700 847.500v-3M1453 842.700h3M1462.500 842.700h-3" stroke="#666" stroke-width=".9" fill="none"/>
<path d="M1456.600 839.600l1.100-1.400l1.100 1.400M1456.600 845.900l1.100 1.400l1.100-1.400M1454.600 841.600l-1.400 1.100l1.400 1.100M1460.900 841.600l1.400 1.100l-1.400 1.100" stroke="#666" stroke-width=".8" fill="none"/>
</g>
</svg>
</div>
</body>
</html>
